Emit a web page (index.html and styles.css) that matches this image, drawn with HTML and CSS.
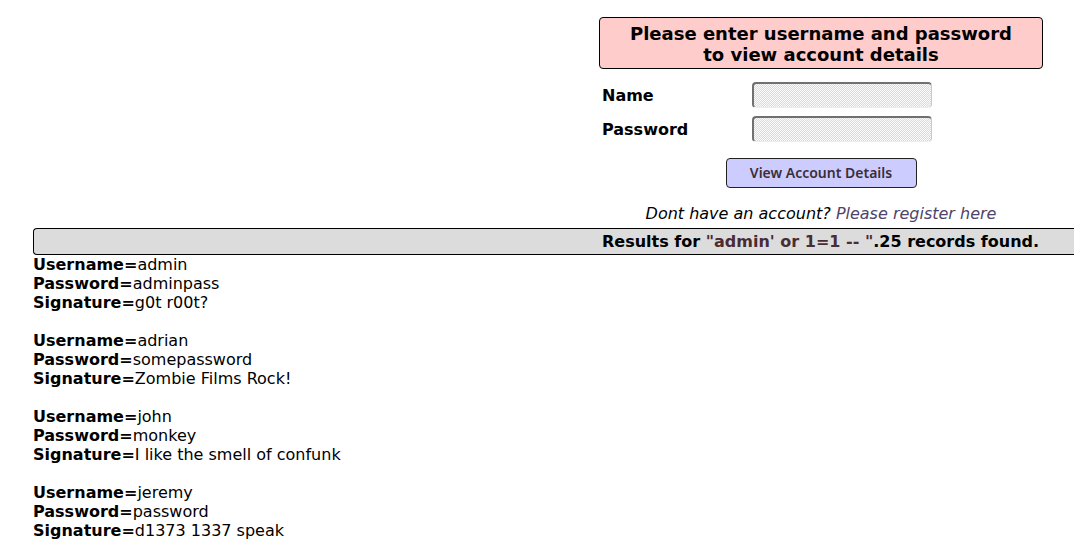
FILE: index.html
```html
<!DOCTYPE html>
<html>
<head>
<meta charset="utf-8">
<title>User Info</title>
<link rel="stylesheet" href="styles.css">
</head>
<body>
<div class="page">
  <form class="login">
    <div class="login-title">Please enter username and password<br>to view account details</div>
    <div class="field-row">
      <label class="field-label">Name</label>
      <input class="field-input" type="text">
    </div>
    <div class="field-row">
      <label class="field-label">Password</label>
      <input class="field-input" type="password">
    </div>
    <div class="button-row">
      <button class="submit-btn" type="button">View Account Details</button>
    </div>
    <div class="register">Dont have an account? <a class="register-link" href="#">Please register here</a></div>
  </form>
  <div class="results-bar"><span class="results-text">Results for <span class="query">"admin' or 1=1 -- "</span>.25 records found.</span></div>
  <div class="records">
    <div class="record">
      <div><b>Username=</b>admin</div>
      <div><b>Password=</b>adminpass</div>
      <div><b>Signature=</b>g0t r00t?</div>
    </div>
    <div class="record">
      <div><b>Username=</b>adrian</div>
      <div><b>Password=</b>somepassword</div>
      <div><b>Signature=</b>Zombie Films Rock!</div>
    </div>
    <div class="record">
      <div><b>Username=</b>john</div>
      <div><b>Password=</b>monkey</div>
      <div><b>Signature=</b>I like the smell of confunk</div>
    </div>
    <div class="record">
      <div><b>Username=</b>jeremy</div>
      <div><b>Password=</b>password</div>
      <div><b>Signature=</b>d1373 1337 speak</div>
    </div>
  </div>
</div>
</body>
</html>
```

FILE: styles.css
```css
html, body {
  margin: 0;
  padding: 0;
  background: #fff;
  overflow: hidden;
}
body {
  font-family: "DejaVu Sans", sans-serif;
  font-size: 16px;
  color: #000;
}
.page {
  padding: 17px 0 0 33px;
}
.login {
  margin: 0 0 0 566px;
  width: 444px;
}
.login-title {
  border: 1px solid #000;
  border-radius: 4px;
  background: #ffcccc;
  text-align: center;
  font-weight: bold;
  font-size: 18px;
  line-height: 21px;
  padding: 5px 0 3px;
}
.field-row {
  display: flex;
  align-items: center;
  margin-top: 13px;
  padding-left: 3px;
}
.field-row + .field-row {
  margin-top: 8px;
}
.field-label {
  width: 150px;
  font-weight: bold;
  line-height: 19px;
}
.field-input {
  box-sizing: border-box;
  width: 180px;
  height: 26px;
  margin: 0;
  border-top: 2px solid #707070;
  border-left: 2px solid #707070;
  border-right: 1px solid #c8c8c8;
  border-bottom: 1px solid #ececec;
  border-radius: 4px;
  background: repeating-conic-gradient(#dadada 0 25%, #fbfbfb 0 50%) 0 0 / 2px 2px;
}
.button-row {
  display: flex;
  justify-content: center;
  margin-top: 16px;
}
.submit-btn {
  box-sizing: border-box;
  width: 191px;
  height: 30px;
  margin: 0;
  border: 1px solid #222;
  border-radius: 4px;
  background: #ccccff;
  font-family: "Noto Sans", sans-serif;
  font-size: 14px;
  font-weight: 600;
  line-height: 26px;
  color: #3a2e38;
  padding: 0 0 1px;
}
.register {
  text-align: center;
  font-style: italic;
  margin-top: 16px;
  line-height: 19px;
}
.register-link {
  color: #4d4468;
  text-decoration: none;
}
.results-bar {
  margin-top: 5px;
  box-sizing: border-box;
  height: 27px;
  border: 1px solid #000;
  border-right: none;
  border-radius: 4px 0 0 4px;
  background: #dcdcdc;
  font-weight: bold;
  font-size: 16px;
  line-height: 25px;
  padding-left: 568px;
  white-space: nowrap;
}
.query {
  color: #4a2c33;
}
.records {
  line-height: 19px;
}
.record {
  margin-bottom: 19px;
}
```
